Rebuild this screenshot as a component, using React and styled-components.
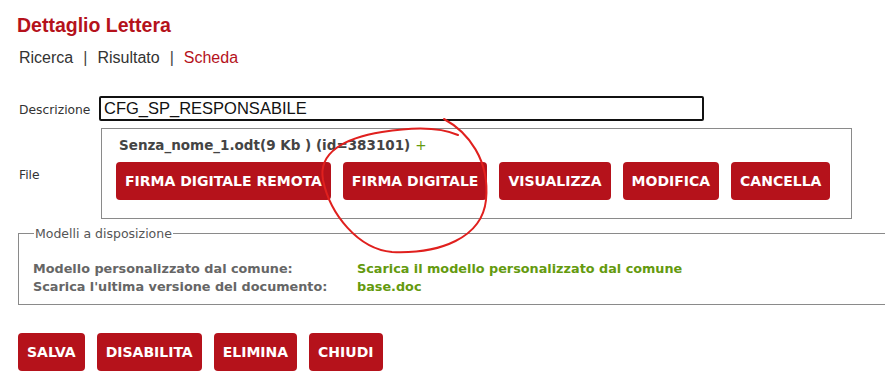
import React from 'react'
import styled, { createGlobalStyle } from 'styled-components'

const GlobalStyle = createGlobalStyle`
  html, body {
    margin: 0;
    padding: 0;
    background: #ffffff;
    overflow: hidden;
  }
  body {
    font-family: "DejaVu Sans", Verdana, sans-serif;
    color: #333;
  }
`

const RED = '#b5121b'
const GREEN = '#649a0e'

const fileButtons = ['FIRMA DIGITALE REMOTA', 'FIRMA DIGITALE', 'VISUALIZZA', 'MODIFICA', 'CANCELLA']
const mainButtons = ['SALVA', 'DISABILITA', 'ELIMINA', 'CHIUDI']

const models = [
  { label: 'Modello personalizzato dal comune:', link: 'Scarica il modello personalizzato dal comune' },
  { label: "Scarica l'ultima versione del documento:", link: 'base.doc' },
]

const App = () => {
  return (
    <Page>
      <GlobalStyle />
      <Title>Dettaglio Lettera</Title>
      <Breadcrumb>
        <span>Ricerca</span>
        <Sep>|</Sep>
        <span>Risultato</span>
        <Sep>|</Sep>
        <Current>Scheda</Current>
      </Breadcrumb>

      <Form>
        <Row>
          <Label>Descrizione</Label>
          <Input defaultValue="CFG_SP_RESPONSABILE" />
        </Row>
        <Row $gap={7}>
          <Label>File</Label>
          <FileBox>
            <FileName>
              Senza_nome_1.odt(9 Kb ) (id=383101)
              <Plus>+</Plus>
            </FileName>
            <ButtonRow>
              {fileButtons.map((b) => (
                <Button key={b}>{b}</Button>
              ))}
            </ButtonRow>
          </FileBox>
        </Row>
      </Form>

      <Models>
        <Legend>Modelli a disposizione</Legend>
        <ModelGrid>
          {models.map((m) => (
            <React.Fragment key={m.label}>
              <ModelLabel>{m.label}</ModelLabel>
              <ModelLink href="#">{m.link}</ModelLink>
            </React.Fragment>
          ))}
        </ModelGrid>
      </Models>

      <ButtonRow $top={28}>
        {mainButtons.map((b) => (
          <Button key={b}>{b}</Button>
        ))}
      </ButtonRow>

      <Scribble viewBox="0 0 885 386" width="885" height="386">
        <path
          d="M444,119 C468,132 490,160 486,200 C482,238 440,254 392,252 C358,249 330,214 323,180 C318,152 345,138 382,132 C412,127 440,127 458,135"
          fill="none"
          stroke="#e0201e"
          strokeWidth="2"
          strokeLinecap="round"
        />
      </Scribble>
    </Page>
  )
}

export default App

const Page = styled.div`
  position: relative;
  width: 885px;
  height: 386px;
  padding: 13px 0 0 18px;
  box-sizing: border-box;
`

const Title = styled.h1`
  margin: 0 0 0 -1px;
  font-family: "Liberation Sans", Arial, sans-serif;
  font-size: 19.5px;
  line-height: 24px;
  font-weight: 700;
  color: ${RED};
`

const Breadcrumb = styled.div`
  margin-top: 11px;
  display: flex;
  align-items: center;
  font-family: "Liberation Sans", Arial, sans-serif;
  font-size: 16px;
  line-height: 20px;
  color: #333;
  padding-left: 1px;
`

const Sep = styled.span`
  margin: 0 10px;
  color: #444;
`

const Current = styled.span`
  color: ${RED};
`

const Form = styled.div`
  margin-top: 28px;
  display: flex;
  flex-direction: column;
`

const Row = styled.div`
  display: flex;
  align-items: center;
  margin-top: ${(p) => p.$gap || 0}px;
`

const Label = styled.div`
  width: 80px;
  padding: 2px 0 0 1px;
  font-size: 12.3px;
  color: #333;
`

const Input = styled.input`
  width: 605px;
  height: 25px;
  box-sizing: border-box;
  border: 2px solid #111;
  border-radius: 2px;
  padding: 0 3px;
  font-family: "Liberation Sans", Arial, sans-serif;
  font-size: 16.5px;
  color: #111;
  outline: none;
`

const FileBox = styled.div`
  margin-left: 2px;
  width: 751px;
  height: 91px;
  box-sizing: border-box;
  border: 1px solid #8a8a8a;
  padding: 6px 0 0 14px;
`

const FileName = styled.div`
  padding-left: 3px;
  font-size: 13.5px;
  line-height: 20px;
  font-weight: 700;
  color: #444;
`

const Plus = styled.span`
  margin-left: 5px;
  color: ${GREEN};
  font-weight: 400;
`

const ButtonRow = styled.div`
  display: flex;
  gap: 12px;
  margin-top: ${(p) => (p.$top != null ? p.$top : 7)}px;
`

const Button = styled.button`
  height: 38px;
  padding: 0 9px;
  border: none;
  border-radius: 4px;
  background: ${RED};
  color: #fff;
  font-family: "DejaVu Sans", Verdana, sans-serif;
  font-size: 14px;
  font-weight: 700;
  cursor: pointer;
`

const Models = styled.fieldset`
  margin: 7px 0 0 0;
  width: 900px;
  box-sizing: border-box;
  border: 1px solid #8a8a8a;
  border-right: none;
  padding: 19px 0 8px 14px;
`

const Legend = styled.legend`
  padding: 0 1px;
  margin-left: 1px;
  font-size: 12.5px;
  color: #555;
`

const ModelGrid = styled.div`
  display: grid;
  grid-template-columns: 324px auto;
  font-size: 12.8px;
  line-height: 18px;
  font-weight: 700;
`

const ModelLabel = styled.div`
  color: #666;
`

const ModelLink = styled.a`
  color: ${GREEN};
  text-decoration: none;
`

const Scribble = styled.svg`
  position: absolute;
  left: 0;
  top: 0;
  pointer-events: none;
`
